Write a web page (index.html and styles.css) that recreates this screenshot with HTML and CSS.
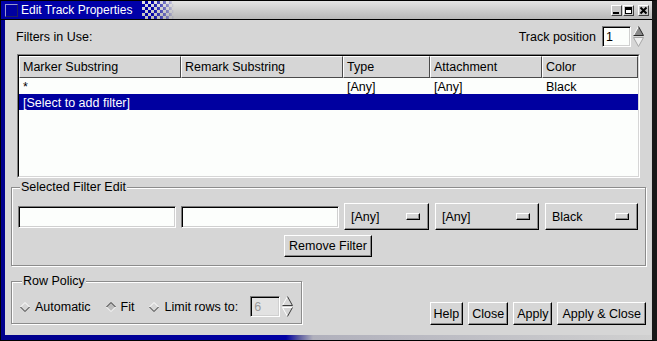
FILE: index.html
```html
<!DOCTYPE html>
<html>
<head>
<meta charset="utf-8">
<title>Edit Track Properties</title>
<link rel="stylesheet" href="styles.css">
</head>
<body>
<div class="window">
  <div class="titlebar">
    <div class="title-blue">
      <span class="ticon"></span>
      <span class="title">Edit Track Properties</span>
    </div>
    <div class="dither"></div>
    <div class="wbtns">
      <span class="wb"><svg width="9" height="9" viewBox="0 0 9 9"><rect x="1" y="6" width="6" height="2" fill="#000"/></svg></span>
      <span class="wb"><svg width="9" height="9" viewBox="0 0 9 9"><rect x="1.5" y="1.5" width="6" height="6" fill="#fff" stroke="#000"/><rect x="2" y="2" width="5" height="2" fill="#000"/></svg></span>
      <span class="wb wb-x"><svg width="9" height="9" viewBox="0 0 9 9"><path d="M1.5 1.5 L7.5 7.5 M7.5 1.5 L1.5 7.5" stroke="#000" stroke-width="2"/></svg></span>
    </div>
  </div>
  <div class="client">
    <div class="toprow">
      <span class="lbl">Filters in Use:</span>
      <div class="trackpos">
        <span>Track position</span>
        <span class="field spin-field">1</span>
        <svg class="spinarrows" width="11" height="21" viewBox="0 0 11 21">
          <polygon points="5.5,0.5 10.5,9.5 0.5,9.5" fill="#8a8a8a"/>
          <path d="M0.5 9.5 L5.5 0.5" stroke="#fff" fill="none"/>
          <path d="M5.5 0.5 L10.5 9.5 L0.5 9.5" stroke="#2a2a2a" fill="none"/>
          <polygon points="0.5,11.5 10.5,11.5 5.5,20.5" fill="#eeeeee" stroke="#a6a6a6"/>
        </svg>
      </div>
    </div>

    <div class="table">
      <div class="table-inner">
        <div class="trow thead">
          <span class="th">Marker Substring</span>
          <span class="th">Remark Substring</span>
          <span class="th">Type</span>
          <span class="th">Attachment</span>
          <span class="th">Color</span>
        </div>
        <div class="trow">
          <span class="td">*</span>
          <span class="td"></span>
          <span class="td">[Any]</span>
          <span class="td">[Any]</span>
          <span class="td">Black</span>
        </div>
        <div class="trow sel">
          <span class="td">[Select to add filter]</span>
        </div>
      </div>
    </div>

    <fieldset class="group group-edit">
      <legend>Selected Filter Edit</legend>
      <div class="edit-row">
        <span class="field wide"></span>
        <span class="field wide"></span>
        <span class="optmenu om1">[Any]<span class="ind"></span></span>
        <span class="optmenu om2">[Any]<span class="ind"></span></span>
        <span class="optmenu om3">Black<span class="ind"></span></span>
      </div>
      <div class="remove-row">
        <button class="btn">Remove Filter</button>
      </div>
    </fieldset>

    <div class="bottom">
      <fieldset class="group group-policy">
        <legend>Row Policy</legend>
        <div class="radio-row">
          <span class="radio">
            <svg width="10" height="10" viewBox="0 0 10 10"><polygon points="5,0.5 9.5,5 5,9.5 0.5,5" fill="#d6d6d6"/><path d="M0.5 5 L5 0.5 L9.5 5" stroke="#fff" fill="none"/><path d="M0.5 5 L5 9.5 L9.5 5" stroke="#2e2e2e" fill="none"/></svg>
            Automatic
          </span>
          <span class="radio">
            <svg width="10" height="10" viewBox="0 0 10 10"><polygon points="5,0.5 9.5,5 5,9.5 0.5,5" fill="#bcbcbc"/><path d="M0.5 5 L5 0.5 L9.5 5" stroke="#2e2e2e" fill="none"/><path d="M0.5 5 L5 9.5 L9.5 5" stroke="#fff" fill="none"/></svg>
            Fit
          </span>
          <span class="radio">
            <svg width="10" height="10" viewBox="0 0 10 10"><polygon points="5,0.5 9.5,5 5,9.5 0.5,5" fill="#d6d6d6"/><path d="M0.5 5 L5 0.5 L9.5 5" stroke="#fff" fill="none"/><path d="M0.5 5 L5 9.5 L9.5 5" stroke="#2e2e2e" fill="none"/></svg>
            Limit rows to:
          </span>
          <span class="field rows-field">6</span>
          <svg class="spinarrows" width="11" height="21" viewBox="0 0 11 21">
            <polygon points="5.5,0.5 10.5,9.5 0.5,9.5" fill="#d6d6d6"/>
            <path d="M0.5 9.5 L5.5 0.5" stroke="#fff" fill="none"/>
            <path d="M5.5 0.5 L10.5 9.5 L0.5 9.5" stroke="#3a3a3a" fill="none"/>
            <polygon points="0.5,11.5 10.5,11.5 5.5,20.5" fill="#d6d6d6"/>
            <path d="M0.5 11.5 L10.5 11.5 M0.5 11.5 L5.5 20.5" stroke="#fff" fill="none"/>
            <path d="M10.5 11.5 L5.5 20.5" stroke="#3a3a3a" fill="none"/>
          </svg>
        </div>
      </fieldset>
      <div class="actions">
        <button class="btn">Help</button>
        <button class="btn">Close</button>
        <button class="btn">Apply</button>
        <button class="btn btn-wide">Apply &amp; Close</button>
      </div>
    </div>
  </div>
</div>
</body>
</html>
```
FILE: styles.css
```css
* { box-sizing: border-box; }
html, body { margin: 0; padding: 0; }
body {
  font-family: "Liberation Sans", Arial, sans-serif;
  font-size: 12.5px;
  line-height: 14px;
  color: #000;
  background: #fff;
}
.window {
  width: 657px;
  height: 341px;
  display: flex;
  flex-direction: column;
  border: 1px solid #000;
  border-right: 5px solid #181818;
  background: linear-gradient(to right, #00008c 0, #0000a4 285px, #5a5aa0 298px, #b0b0bc 312px, #d0d0d0 100%);
}
.titlebar {
  height: 19px;
  flex: none;
  display: flex;
  align-items: stretch;
  border-bottom: 1px solid #000;
  background: linear-gradient(to bottom, #e4e4e4, #b8b8b8);
}
.title-blue {
  width: 141px;
  display: flex;
  align-items: center;
  padding-left: 4px;
  background: #0000a8;
}
.ticon {
  width: 13px;
  height: 13px;
  border: 1px solid;
  border-color: #9898d0 #202060 #202060 #9898d0;
  background: #0000a0;
}
.title {
  margin-left: 3px;
  color: #fff;
  font-size: 12px;
  white-space: nowrap;
}
.dither {
  width: 32px;
  background:
    conic-gradient(#0000a8 25%, transparent 0 50%, #0000a8 0 75%, transparent 0) 0 0 / 6px 6px;
  -webkit-mask-image: linear-gradient(to right, #000 30%, rgba(0,0,0,0.35) 80%, transparent);
  mask-image: linear-gradient(to right, #000 30%, rgba(0,0,0,0.35) 80%, transparent);
}
.wbtns {
  margin-left: auto;
  margin-right: 3px;
  display: flex;
  align-items: center;
  gap: 1px;
}
.wb {
  width: 11px;
  height: 11px;
  border: 1px solid;
  border-color: #fff #404040 #404040 #fff;
  background: #c8c8c8;
  display: flex;
  align-items: center;
  justify-content: center;
}
.wb-x { margin-left: 3px; }

.client {
  flex: 1;
  margin: 0 1px 5px 4px;
  padding: 6px 5px 0 6px;
  background: #d6d6d6;
  display: flex;
  flex-direction: column;
}
.toprow {
  height: 21px;
  display: flex;
  align-items: center;
  justify-content: space-between;
  padding: 0 2px 0 5px;
}
.trackpos {
  display: flex;
  align-items: center;
}
.field {
  display: inline-flex;
  align-items: center;
  border: 1px solid;
  border-color: #7a7a7a #fff #fff #7a7a7a;
  box-shadow: inset 1px 1px 0 #000, inset -1px -1px 0 #d0d0d0;
  background: #fcfefc;
}
.spin-field {
  width: 29px;
  height: 21px;
  margin-left: 6px;
  padding-left: 3px;
}
.spinarrows { margin-left: 2px; display: block; }

.table {
  margin: 7px 6px 0;
  height: 124px;
  border: 1px solid;
  border-color: #808080 #fff #fff #808080;
}
.table-inner {
  height: 100%;
  border: 1px solid;
  border-color: #000 #d6d6d6 #d6d6d6 #000;
  background: #fcfefc;
}
.trow {
  display: grid;
  grid-template-columns: 162px 162px 87px 112px 1fr;
  height: 16px;
  align-items: center;
}
.thead {
  height: 22px;
  background: #d6d6d6;
  align-items: stretch;
}
.th {
  display: flex;
  align-items: center;
  padding-left: 3px;
  border: 1px solid;
  border-color: #fff #4a4a4a #4a4a4a #fff;
  white-space: nowrap;
}
.td {
  padding-left: 4px;
  padding-top: 1px;
  white-space: nowrap;
}
.sel {
  background: #0000a0;
  color: #fff;
}

.group {
  margin: 0;
  min-width: 0;
  border: 1px solid #8c8c8c;
  box-shadow: inset 1px 1px 0 #fff, 1px 1px 0 #fff;
}
.group legend {
  padding: 0 1px;
  margin-left: 2px;
  line-height: 14px;
  background: #d6d6d6;
}
.group-edit {
  margin-top: 2px;
  padding: 0 7px 8px 6px;
}
.edit-row {
  margin-top: 9px;
  display: flex;
  align-items: center;
  gap: 5px;
}
.field.wide {
  width: 158px;
  height: 22px;
}
.optmenu {
  height: 27px;
  display: flex;
  align-items: center;
  justify-content: space-between;
  padding: 0 8px 0 6px;
  border: 1px solid;
  border-color: #fff #000 #000 #fff;
  box-shadow: inset -1px -1px 0 #8a8a8a;
  background: #d6d6d6;
}
.om1 { width: 85px; }
.om2 { width: 104px; margin-left: 1px; }
.om3 { width: 93px; margin-left: 1px; }
.ind {
  width: 14px;
  height: 7px;
  border: 1px solid;
  border-color: #fff #000 #000 #fff;
  box-shadow: inset -1px -1px 0 #8a8a8a;
}
.remove-row {
  margin-top: 5px;
  display: flex;
  justify-content: center;
}
.btn {
  height: 23px;
  margin: 0;
  padding: 0 3px;
  font: inherit;
  color: #000;
  border: 1px solid;
  border-color: #fff #000 #000 #fff;
  box-shadow: inset -1px -1px 0 #8a8a8a;
  background: #d6d6d6;
  border-radius: 0;
  display: inline-flex;
  align-items: center;
  white-space: nowrap;
}
.btn-wide { padding: 0 4px; }
.remove-row .btn { height: 22px; padding: 0 4px; }

.bottom {
  margin-top: 8px;
  display: flex;
  align-items: flex-end;
  justify-content: space-between;
}
.group-policy {
  width: 291px;
  padding: 0 8px 6px 8px;
}
.radio-row {
  margin-top: 8px;
  display: flex;
  align-items: center;
}
.radio {
  display: inline-flex;
  align-items: center;
  gap: 5px;
  margin-right: 15px;
  white-space: nowrap;
}
.radio:nth-child(3) { margin-right: 12px; }
.rows-field {
  width: 30px;
  height: 21px;
  padding-left: 3px;
  color: #9a9a9a;
  background: #e2e2e2;
}
.actions {
  display: flex;
  gap: 5px;
  margin-bottom: -1px;
}
```
